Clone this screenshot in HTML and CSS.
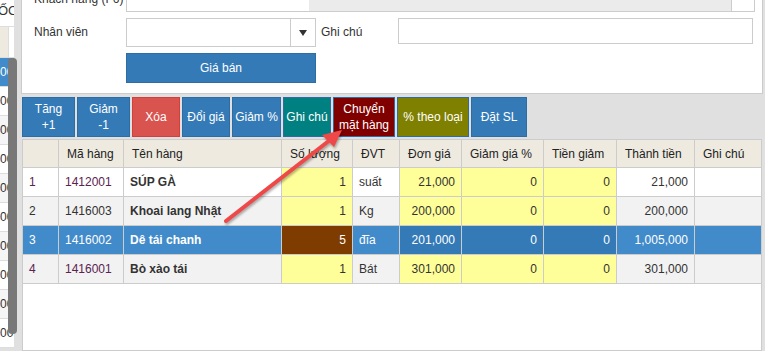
FILE: index.html
```html
<!DOCTYPE html>
<html lang="vi">
<head>
    <meta charset="UTF-8">
    <meta name="viewport" content="width=device-width, initial-scale=1.0">
    <title>Bán hàng - Hóa đơn</title>
    <link rel="stylesheet" href="styles.css">
</head>
<body>
    <div class="screen">
        <div class="side">
            <div class="side-table">
                <div class="side-top">ỐC</div>
                <div class="side-head"><span class="side-head-cell"></span></div>
                <div class="side-row active">00</div>
                <div class="side-row">00</div>
                <div class="side-row alt">00</div>
                <div class="side-row">00</div>
                <div class="side-row alt">00</div>
                <div class="side-row">00</div>
                <div class="side-row alt">00</div>
                <div class="side-row">00</div>
                <div class="side-row alt">00</div>
                <div class="side-row">00</div>
            </div>
            <div class="side-thumb"></div>
        </div>

        <div class="main">
            <div class="form-panel">
                <div class="form-row row-top">
                    <label class="form-label">Khách hàng (F6)</label>
                    <div class="combo">
                        <div class="combo-input"></div>
                        <div class="combo-info"></div>
                        <div class="combo-btn">+</div>
                    </div>
                </div>
                <div class="form-row">
                    <label class="form-label">Nhân viên</label>
                    <div class="select">
                        <div class="select-val"></div>
                        <div class="select-arrow"><span class="caret"></span></div>
                    </div>
                    <label class="form-label note-label">Ghi chú</label>
                    <input class="text-input" type="text">
                </div>
                <div class="form-row">
                    <span class="form-label"></span>
                    <button class="btn-price">Giá bán</button>
                </div>
            </div>

            <div class="toolbar">
                <button class="tool blue w-inc">Tăng<br>+1</button>
                <button class="tool blue w-dec">Giảm<br>-1</button>
                <button class="tool red w-del">Xóa</button>
                <button class="tool blue w-price">Đổi giá</button>
                <button class="tool blue w-pct">Giảm %</button>
                <button class="tool teal w-note">Ghi chú</button>
                <button class="tool maroon w-move">Chuyển<br>mặt hàng</button>
                <button class="tool olive w-type">% theo loại</button>
                <button class="tool blue w-qty">Đặt SL</button>
            </div>

            <div class="grid-wrap">
                <table class="grid">
                    <thead>
                        <tr>
                            <th class="c-no"></th>
                            <th class="c-code">Mã hàng</th>
                            <th class="c-name">Tên hàng</th>
                            <th class="c-qty">Số lượng</th>
                            <th class="c-unit">ĐVT</th>
                            <th class="c-price">Đơn giá</th>
                            <th class="c-pct">Giảm giá %</th>
                            <th class="c-disc">Tiền giảm</th>
                            <th class="c-total">Thành tiền</th>
                            <th class="c-note">Ghi chú</th>
                        </tr>
                    </thead>
                    <tbody>
                        <tr>
                            <td class="first">1</td>
                            <td class="first">1412001</td>
                            <td class="name">SÚP GÀ</td>
                            <td class="num edit">1</td>
                            <td>suất</td>
                            <td class="num edit">21,000</td>
                            <td class="num edit">0</td>
                            <td class="num edit">0</td>
                            <td class="num">21,000</td>
                            <td></td>
                        </tr>
                        <tr class="even">
                            <td>2</td>
                            <td>1416003</td>
                            <td class="name">Khoai lang Nhật</td>
                            <td class="num edit">1</td>
                            <td>Kg</td>
                            <td class="num edit">200,000</td>
                            <td class="num edit">0</td>
                            <td class="num edit">0</td>
                            <td class="num">200,000</td>
                            <td></td>
                        </tr>
                        <tr class="selected">
                            <td>3</td>
                            <td>1416002</td>
                            <td class="name">Dê tái chanh</td>
                            <td class="num edit qty">5</td>
                            <td>đĩa</td>
                            <td class="num edit">201,000</td>
                            <td class="num edit">0</td>
                            <td class="num edit">0</td>
                            <td class="num">1,005,000</td>
                            <td></td>
                        </tr>
                        <tr class="even">
                            <td class="first">4</td>
                            <td class="first">1416001</td>
                            <td class="name">Bò xào tái</td>
                            <td class="num edit">1</td>
                            <td>Bát</td>
                            <td class="num edit">301,000</td>
                            <td class="num edit">0</td>
                            <td class="num edit">0</td>
                            <td class="num">301,000</td>
                            <td></td>
                        </tr>
                    </tbody>
                </table>
            </div>
        </div>

        <!-- annotation arrow drawn over the screen -->
        <svg class="arrow" width="765" height="351" viewBox="0 0 765 351">
            <g class="arrow-shape">
                <line x1="226" y1="221" x2="330" y2="140" stroke="#ef4848" stroke-width="4" stroke-linecap="round"/>
                <polygon points="342,130 334,147 322,135" fill="#ef4848"/>
            </g>
        </svg>
    </div>
</body>
</html>
```

FILE: styles.css
```css
body {
    margin: 0;
    padding: 0;
    background: #e0e0e0;
    font-family: "Liberation Sans", Arial, sans-serif;
    font-size: 12px;
    color: #333333;
    overflow: hidden;
}

.screen {
    position: relative;
    display: flex;
    width: 765px;
    height: 351px;
    overflow: hidden;
}

/* left list (partly hidden) */
.side {
    position: relative;
    width: 21px;
    flex-shrink: 0;
}

.side-table {
    width: 14px;
    background: #ffffff;
    overflow: hidden;
}

.side-top {
    height: 26px;
    line-height: 22px;
    border-bottom: 1px solid #dddddd;
    font-size: 13px;
    white-space: nowrap;
    text-indent: -2px;
}

.side-head {
    height: 30px;
    border-bottom: 1px solid #dddddd;
    background: #ffffff;
}

.side-head-cell {
    display: block;
    width: 8px;
    height: 30px;
    background: #eeeae0;
    border-right: 1px solid #dddddd;
}

.side-row {
    height: 28px;
    line-height: 28px;
    border-bottom: 1px solid #dddddd;
    white-space: nowrap;
    background: #ffffff;
}

.side-row.alt {
    background: #f5f5f5;
}

.side-row.active {
    background: #428bca;
    color: #ffffff;
}

.side-thumb {
    position: absolute;
    left: 8px;
    top: 58px;
    width: 9px;
    height: 276px;
    background: #787878;
    border-radius: 4px;
}

/* main area */
.main {
    width: 742px;
    display: flex;
    flex-direction: column;
}

.form-panel {
    margin-top: -14px;
    background: #ffffff;
    border: 1px solid #cccccc;
    border-top: none;
    padding: 0 0 10px 12px;
}

.form-row {
    display: flex;
    align-items: flex-start;
    margin-bottom: 6px;
}

.form-row:last-child {
    margin-bottom: 0;
}

.form-label {
    width: 92px;
    flex-shrink: 0;
    line-height: 28px;
    color: #333333;
}

.row-top .form-label {
    line-height: 26px;
}

.combo {
    display: flex;
    width: 629px;
    height: 26px;
    box-sizing: border-box;
    border: 1px solid #cccccc;
}

.combo-input {
    width: 182px;
    background: #ffffff;
}

.combo-info {
    flex: 1;
    background: #ebebeb;
}

.combo-btn {
    width: 22px;
    border-left: 1px solid #cccccc;
    background: #ffffff;
    color: #999999;
    text-align: center;
    line-height: 10px;
}

.select {
    display: flex;
    width: 190px;
    height: 29px;
    box-sizing: border-box;
    border: 1px solid #cccccc;
    background: #ffffff;
}

.select-val {
    flex: 1;
}

.select-arrow {
    width: 24px;
    border-left: 1px solid #cccccc;
    display: flex;
    align-items: center;
    justify-content: center;
}

.caret {
    width: 0;
    height: 0;
    border-left: 4px solid transparent;
    border-right: 4px solid transparent;
    border-top: 6px solid #333333;
    margin-top: 1px;
}

.note-label {
    width: 77px;
    margin-left: 5px;
}

.text-input {
    width: 355px;
    height: 26px;
    box-sizing: border-box;
    margin: 0;
    border: 1px solid #cccccc;
    background: #ffffff;
}

.btn-price {
    width: 190px;
    height: 30px;
    margin: 0;
    background: #337ab7;
    border: 1px solid #2e6da4;
    color: #ffffff;
    font-family: "Liberation Sans", Arial, sans-serif;
    font-size: 12px;
}

/* action buttons */
.toolbar {
    display: flex;
    gap: 2px;
    margin-top: 3px;
    padding-left: 1px;
}

.tool {
    height: 40px;
    margin: 0;
    padding: 0;
    border: 1px solid #2e6da4;
    color: #ffffff;
    font-family: "Liberation Sans", Arial, sans-serif;
    font-size: 12px;
    line-height: 16px;
    text-align: center;
}

.tool.blue { background: #337ab7; }
.tool.red { background: #d9534f; border-color: #d43f3a; }
.tool.teal { background: #008080; }
.tool.maroon { background: #800000; }
.tool.olive { background: #808000; }

.w-inc { width: 53px; }
.w-dec { width: 53px; }
.w-del { width: 48px; }
.w-price { width: 48px; }
.w-pct { width: 49px; }
.w-note { width: 48px; }
.w-move { width: 62px; }
.w-type { width: 72px; }
.w-qty { width: 56px; }

/* item grid */
.grid-wrap {
    flex: 1;
    margin: 2px 1px 0;
    background: #ffffff;
    border: 1px solid #cccccc;
}

.grid {
    width: 100%;
    border-collapse: separate;
    border-spacing: 0;
    table-layout: fixed;
}

.grid th,
.grid td {
    box-sizing: border-box;
    border-right: 1px solid #cccccc;
    border-bottom: 1px solid #cccccc;
    white-space: nowrap;
    overflow: hidden;
}

.grid th:last-child,
.grid td:last-child {
    border-right: none;
}

.grid th {
    height: 28px;
    padding: 0 8px;
    background: #eeeae0;
    font-weight: normal;
    text-align: left;
    color: #222222;
}

.grid td {
    height: 29px;
    padding: 0 6px;
    background: #ffffff;
}

.c-no { width: 36px; }
.c-code { width: 65px; }
.c-name { width: 158px; }
.c-qty { width: 71px; }
.c-unit { width: 47px; }
.c-price { width: 62px; }
.c-pct { width: 82px; }
.c-disc { width: 73px; }
.c-total { width: 78px; }
.c-note { width: 66px; }

.grid td.first {
    color: #5a2350;
}

.grid td.name {
    font-weight: bold;
}

.grid td.num {
    text-align: right;
}

.grid tr.even td {
    background: #f2f2f2;
}

.grid td.edit,
.grid tr.even td.edit {
    background: #ffff99;
}

.grid tr.selected td {
    background: #428bca;
    color: #ffffff;
}

.grid tr.selected td.edit {
    background: #337ab7;
}

.grid tr.selected td.qty {
    background: #7e3c00;
}

.arrow {
    position: absolute;
    left: 0;
    top: 0;
    pointer-events: none;
}

.arrow-shape {
    filter: drop-shadow(1px 2px 1px rgba(0, 0, 0, 0.3));
}
```
